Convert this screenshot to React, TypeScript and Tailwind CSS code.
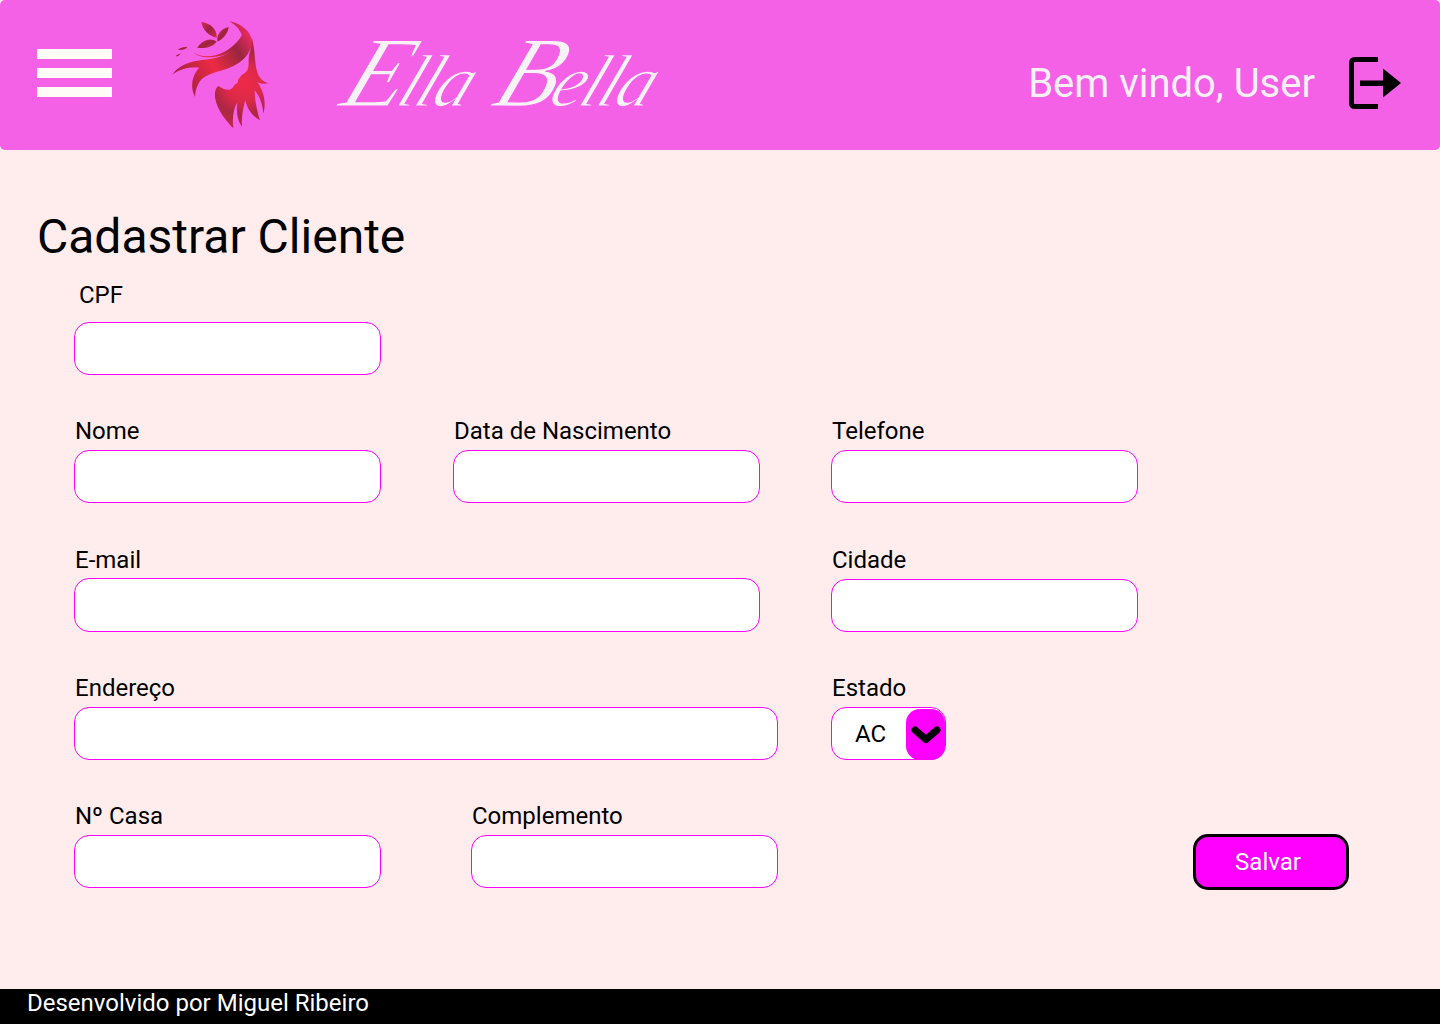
const labelClass = "block h-7 text-2xl leading-[30px] text-black";
const inputClass =
  "block rounded-[15px] border border-[#ff00ff] bg-white px-3 text-2xl outline-none";

function Field({
  label,
  inputWidth,
  gap,
  inputHeight = "h-[53px]",
  labelOffset = "pl-px",
}: {
  label: string;
  inputWidth: string;
  gap: string;
  inputHeight?: string;
  labelOffset?: string;
}) {
  return (
    <div className={inputWidth}>
      <label className={`${labelClass} ${gap} ${labelOffset}`}>{label}</label>
      <input type="text" className={`${inputClass} ${inputHeight} w-full`} />
    </div>
  );
}

function LogoMark() {
  return (
    <svg viewBox="0 0 360 360" className="h-[120px] w-[120px]" aria-hidden>
      <defs>
        <radialGradient id="hair" gradientUnits="userSpaceOnUse" cx="252" cy="205" r="135">
          <stop offset="0" stopColor="#ee2a48" />
          <stop offset="0.4" stopColor="#dd2949" />
          <stop offset="0.72" stopColor="#aa2742" />
          <stop offset="1" stopColor="#c42548" />
        </radialGradient>
        <linearGradient id="leaf" x1="0" y1="0" x2="1" y2="1">
          <stop offset="0" stopColor="#d92a4e" />
          <stop offset="0.5" stopColor="#9c2340" />
          <stop offset="1" stopColor="#d92a4e" />
        </linearGradient>
        <linearGradient id="swoosh" gradientUnits="userSpaceOnUse" x1="60" y1="190" x2="275" y2="60">
          <stop offset="0" stopColor="#a5213f" />
          <stop offset="0.42" stopColor="#ee2a44" />
          <stop offset="0.76" stopColor="#99263f" />
          <stop offset="1" stopColor="#f02a66" />
        </linearGradient>
      </defs>
      <g fill="url(#leaf)">
        <path d="M124 21 C150 24 172 42 170 68 C148 64 128 46 124 21Z" />
        <path d="M206 36 C186 40 168 58 172 80 C190 72 204 56 206 36Z" />
        <path d="M112 98 C126 76 152 66 170 80 C158 96 134 102 112 98Z" />
        <path d="M54 104 C62 97 73 95 82 97 C75 105 64 107 54 104Z" />
        <path d="M47 124 C50 119 56 116 62 116 C59 121 53 124 47 124Z" />
      </g>
      <path
        fill="url(#swoosh)"
        d="M207 18 C244 26 272 48 275 76 C278 104 258 134 222 152 C190 168 150 172 130 188 C114 202 106 222 105 246 C96 228 92 204 104 178 C108 170 112 164 118 158 C90 156 62 160 37 179 C50 158 78 142 112 137 C150 132 186 130 214 108 C232 94 246 74 245 58 C238 40 224 28 207 18Z"
      />
      <path
        fill="url(#swoosh)"
        d="M100 112 C120 128 160 128 190 112 C214 98 232 84 244 62 L250 78 C234 102 206 118 176 124 C146 130 116 128 100 112Z"
      />
      <path
        fill="url(#hair)"
        d="M275 66 C284 96 284 130 288 156 C292 182 304 200 326 205 C312 208 300 206 292 200 C304 220 322 250 310 296 C308 264 296 240 284 226 C284 258 292 290 300 316 C278 304 262 284 256 256 C250 276 244 306 246 336 C232 316 228 290 232 262 C220 282 216 312 220 340 C196 316 172 284 166 252 C162 232 168 216 176 213 C186 220 198 226 208 224 C214 222 218 218 222 212 C226 206 232 206 234 200 C232 196 238 190 242 184 C248 176 254 178 262 166 C270 150 262 130 270 110 C274 96 274 80 275 66Z"
      />
    </svg>
  );
}

function LogoutIcon() {
  return (
    <svg viewBox="0 0 52 52" className="h-[52px] w-[52px]" aria-hidden>
      <path d="M29 2.5H6Q2.500 2.500 2.500 6V46Q2.500 49.500 6 49.500H29" fill="none" stroke="#000" strokeWidth="5" />
      <rect x="11" y="23.500" width="24" height="5.500" fill="#000" />
      <path d="M34 11.500L52 26L34 40.500Z" fill="#000" />
    </svg>
  );
}

function Wordmark() {
  return (
    <div className="mb-[4px] ml-[70px] flex w-[317px] -skew-x-[22deg] items-baseline font-['Liberation_Serif',serif] leading-none whitespace-nowrap text-[#f7f2f6] italic [-webkit-text-stroke:1.2px_#f561e6]">
      <span className="text-[100px]">E</span>
      <span className="-ml-1 text-[74px] tracking-[-3px]">lla</span>
      <span className="ml-[26px] text-[100px]">B</span>
      <span className="-ml-1 text-[74px] tracking-[-3px]">ella</span>
    </div>
  );
}

export default function App() {
  return (
    <div className="flex min-h-[1024px] flex-col bg-[#ffeded] font-['Roboto',sans-serif]">
      <header className="flex h-[150px] items-center rounded-[5px] bg-[#f561e6]">
        <button type="button" className="mb-1 ml-[37px] flex w-[75px] flex-col gap-[9px]">
          <span className="h-2.5 bg-[#fffcf8]" />
          <span className="h-2.5 bg-[#fffcf8]" />
          <span className="h-2.5 bg-[#fffcf8]" />
        </button>
        <div className="mb-[1px] ml-[48px]">
          <LogoMark />
        </div>
        <Wordmark />
        <span className="mt-[17px] mr-[-1px] ml-auto text-[40px] leading-[47px] text-[#f8f0f7]">Bem vindo, User</span>
        <button type="button" className="mt-[16px] mr-[39px] ml-[35px]">
          <LogoutIcon />
        </button>
      </header>

      <main className="flex flex-col pt-[59px] pl-[74px]">
        <h1 className="mb-[15px] -ml-[37px] text-5xl leading-[56px] font-normal text-black">Cadastrar Cliente</h1>

        <Field label="CPF" inputWidth="w-[307px]" gap="mb-3.5" labelOffset="pl-[5px]" />

        <div className="mt-[41px] flex">
          <Field label="Nome" inputWidth="w-[307px]" gap="mb-1.5" />
          <div className="ml-[72px]">
            <Field label="Data de Nascimento" inputWidth="w-[307px]" gap="mb-1.5" />
          </div>
          <div className="ml-[71px]">
            <Field label="Telefone" inputWidth="w-[307px]" gap="mb-1.5" />
          </div>
        </div>

        <div className="mt-[42px] flex gap-[71px]">
          <Field label="E-mail" inputWidth="w-[686px]" gap="mb-[5px]" inputHeight="h-[54px]" />
          <Field label="Cidade" inputWidth="w-[307px]" gap="mb-1.5" />
        </div>

        <div className="mt-[41px] flex gap-[53px]">
          <Field label="Endereço" inputWidth="w-[704px]" gap="mb-1.5" />
          <div>
            <label className={`${labelClass} mb-1.5 pl-px`}>Estado</label>
            <div className="flex h-[53px] w-[115px] items-center rounded-[15px] border border-[#ff00ff] bg-white">
              <span className="ml-[23px] text-2xl leading-7 text-black">AC</span>
              <span className="mt-[2px] ml-auto flex h-[51px] w-[39px] items-center justify-center rounded-[14px] bg-[#ff00ff]">
                <svg viewBox="0 0 30 20" className="h-5 w-[30px]" aria-hidden>
                  <path d="M4 5L15 14.500L26 5" fill="none" stroke="#000" strokeWidth="7" strokeLinecap="round" strokeLinejoin="round" />
                </svg>
              </span>
            </div>
          </div>
        </div>

        <div className="mt-[41px] flex items-end gap-[90px]">
          <Field label="Nº Casa" inputWidth="w-[307px]" gap="mb-1.5" />
          <Field label="Complemento" inputWidth="w-[307px]" gap="mb-1.5" />
          <button
            type="button"
            className="-mb-0.5 mr-[91px] ml-auto h-14 w-[156px] rounded-[15px] border-[3px] border-black bg-[#ff00ff] pr-[6px] text-2xl text-white"
          >
            Salvar
          </button>
        </div>
      </main>

      <footer className="mt-auto h-[35px] bg-black pl-[27px] text-2xl leading-7 text-white">
        Desenvolvido por Miguel Ribeiro
      </footer>
    </div>
  );
}
